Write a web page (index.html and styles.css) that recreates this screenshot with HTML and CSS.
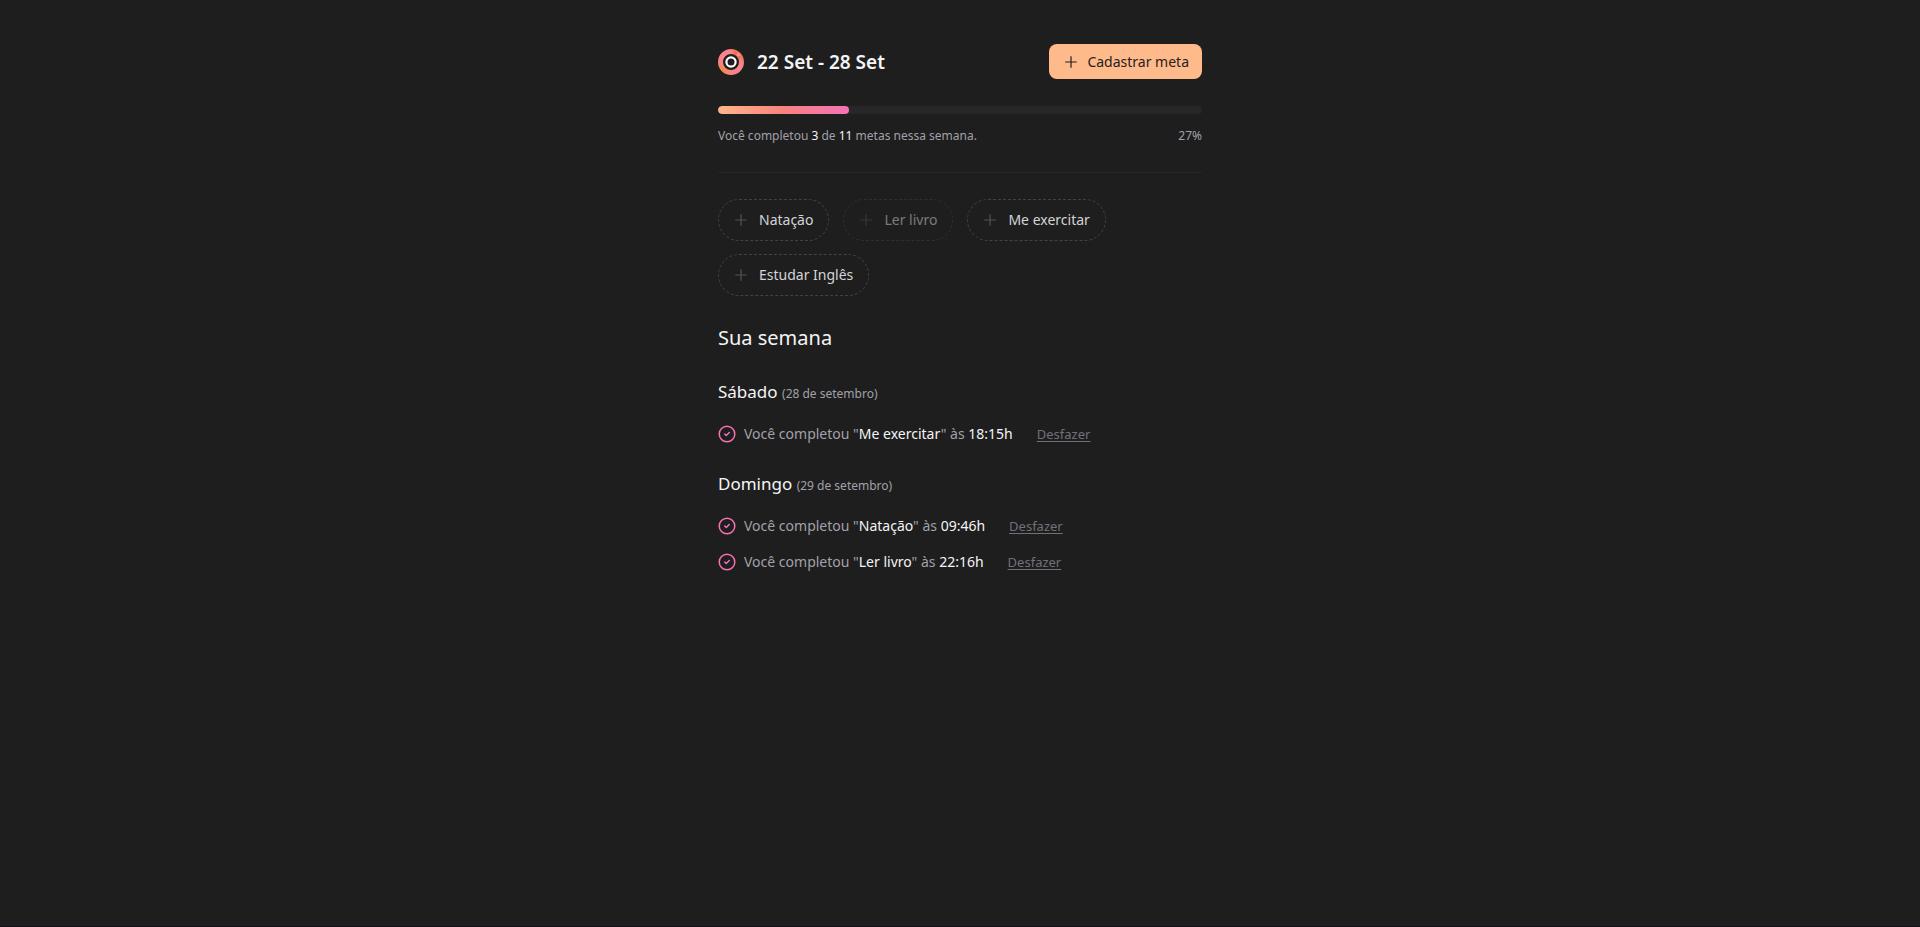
FILE: index.html
```html
<!DOCTYPE html>
<html lang="pt-BR">
<head>
<meta charset="utf-8">
<meta name="viewport" content="width=device-width, initial-scale=1">
<title>Metas da semana</title>
<link rel="stylesheet" href="styles.css">
</head>
<body>
<svg class="sprite" aria-hidden="true">
  <symbol id="plus" viewBox="0 0 24 24"><path d="M4 12h16M12 4v16" fill="none" stroke="currentColor" stroke-width="1.8" stroke-linecap="round"/></symbol>
  <symbol id="check" viewBox="0 0 24 24"><g fill="none" stroke="currentColor" stroke-width="2" stroke-linecap="round" stroke-linejoin="round"><circle cx="12" cy="12" r="10.4"/><path d="m9 12 2 2 4-4"/></g></symbol>
</svg>
<main class="page">
  <header class="header">
    <div class="brand">
      <svg class="logo" viewBox="0 0 26 26" aria-hidden="true">
        <defs>
          <linearGradient id="ring" x1="0" y1="1" x2="1" y2="0">
            <stop offset="0" stop-color="#f08a4b"/><stop offset=".3" stop-color="#f9828a"/><stop offset=".7" stop-color="#f9858a"/><stop offset="1" stop-color="#ee6a4c"/>
          </linearGradient>
        </defs>
        <circle cx="13" cy="13" r="10.5" fill="none" stroke="url(#ring)" stroke-width="5"/>
        <path d="M17 3.6 21.5 8" stroke="#f2703f" stroke-width="2.4" stroke-linecap="round"/>
        <circle cx="20.4" cy="5.8" r="1.8" fill="#fb918c"/>
        <path d="M3 18.5a11 11 0 0 0 5 4.6" fill="none" stroke="#f08b4e" stroke-width="2.6"/>
        <circle cx="13" cy="13" r="4.6" fill="none" stroke="#fff" stroke-width="2.2"/>
      </svg>
      <h1 class="title">22 Set - 28 Set</h1>
    </div>
    <button class="primary" type="button"><svg class="icon" aria-hidden="true"><use href="#plus"/></svg>Cadastrar meta</button>
  </header>

  <section class="progress" aria-label="Progresso">
    <div class="track" role="progressbar" aria-valuemin="0" aria-valuemax="11" aria-valuenow="3" aria-label="Metas completas"><div class="fill" style="width:27%"></div></div>
    <div class="summary"><span>Você completou <span class="strong">3</span> de <span class="strong">11</span> metas nessa semana.</span><span>27%</span></div>
  </section>

  <hr class="divider">

  <div class="goals">
    <button class="goal" type="button"><svg class="icon" aria-hidden="true"><use href="#plus"/></svg>Natação</button>
    <button class="goal" type="button" disabled><svg class="icon" aria-hidden="true"><use href="#plus"/></svg>Ler livro</button>
    <button class="goal" type="button"><svg class="icon" aria-hidden="true"><use href="#plus"/></svg>Me exercitar</button>
    <button class="goal" type="button"><svg class="icon" aria-hidden="true"><use href="#plus"/></svg>Estudar Inglês</button>
  </div>

  <section class="week">
    <h2 class="week-title">Sua semana</h2>
    <section class="day">
      <h3 class="day-title">Sábado <span class="date">(28 de setembro)</span></h3>
      <ul class="log">
        <li class="entry"><svg class="check" aria-hidden="true"><use href="#check"/></svg><span>Você completou "<span class="strong">Me exercitar</span>" às <span class="strong">18:15h</span></span><button class="undo" type="button">Desfazer</button></li>
      </ul>
    </section>
    <section class="day">
      <h3 class="day-title">Domingo <span class="date">(29 de setembro)</span></h3>
      <ul class="log">
        <li class="entry"><svg class="check" aria-hidden="true"><use href="#check"/></svg><span>Você completou "<span class="strong">Natação</span>" às <span class="strong">09:46h</span></span><button class="undo" type="button">Desfazer</button></li>
        <li class="entry"><svg class="check" aria-hidden="true"><use href="#check"/></svg><span>Você completou "<span class="strong">Ler livro</span>" às <span class="strong">22:16h</span></span><button class="undo" type="button">Desfazer</button></li>
      </ul>
    </section>
  </section>
</main>
</body>
</html>
```
FILE: styles.css
```css
* { box-sizing: border-box; }
body {
  margin: 0;
  min-height: 100vh;
  background: #1e1e1e;
  border-bottom: 1px solid #18111b;
  color: #f4f4f5;
  font: 14px/20px "Noto Sans", sans-serif;
}
h1, h2, h3, ul { margin: 0; padding: 0; font-weight: 400; }
button { font: inherit; cursor: pointer; }
.sprite { display: none; }
.page { max-width: 516px; margin: 0 auto; padding: 44px 16px; }
.header { display: flex; align-items: center; justify-content: space-between; }
.brand { display: flex; align-items: center; gap: 13px; }
.logo { width: 26px; height: 26px; }
.title { font-size: 19px; line-height: 28px; font-weight: 600; }
.icon { width: 16px; height: 16px; flex: none; }
.primary {
  display: flex; align-items: center; gap: 8px;
  height: 35px; padding: 0 13px 0 14px;
  border: 0; border-radius: 8px;
  background: #ffba8b; color: #27201d;
}
.progress { margin-top: 27px; }
.track { height: 8px; border-radius: 4px; background: #27272a; overflow: hidden; }
.fill { height: 100%; border-radius: 4px; background: linear-gradient(to right, #feb68b, #f9827f 50%, #f472b6); }
.summary { display: flex; justify-content: space-between; margin-top: 13px; font-size: 12px; line-height: 18px; color: #a1a1aa; }
.strong { color: #f4f4f5; }
.divider { height: 1px; margin: 27px 0 26px; border: 0; background: #27272a; }
.goals { display: flex; flex-wrap: wrap; gap: 13px 14px; }
.goal {
  display: flex; align-items: center; gap: 10px;
  height: 42px; padding: 0 15px 0 14px;
  border: 1px dashed #434346; border-radius: 21px;
  background: transparent; color: #d4d4d8;
}
.goal .icon { color: #52525b; }
.goal:disabled { opacity: .5; cursor: default; }
.week { margin-top: 28px; }
.week-title { font-size: 20px; line-height: 28px; }
.day { margin-top: 27px; }
.day-title { font-size: 17px; line-height: 26px; }
.date { font-size: 12px; color: #a1a1aa; }
.log { display: grid; gap: 16px; margin-top: 17px; list-style: none; }
.entry { display: flex; align-items: center; color: #a1a1aa; }
.check { width: 18px; height: 18px; margin-right: 8px; color: #f472b6; }
.undo {
  margin-left: 24px; padding: 0; border: 0; background: none;
  color: #71717a; font-size: 13px; line-height: 18px;
  text-decoration: underline; text-underline-offset: 2px;
}
```
